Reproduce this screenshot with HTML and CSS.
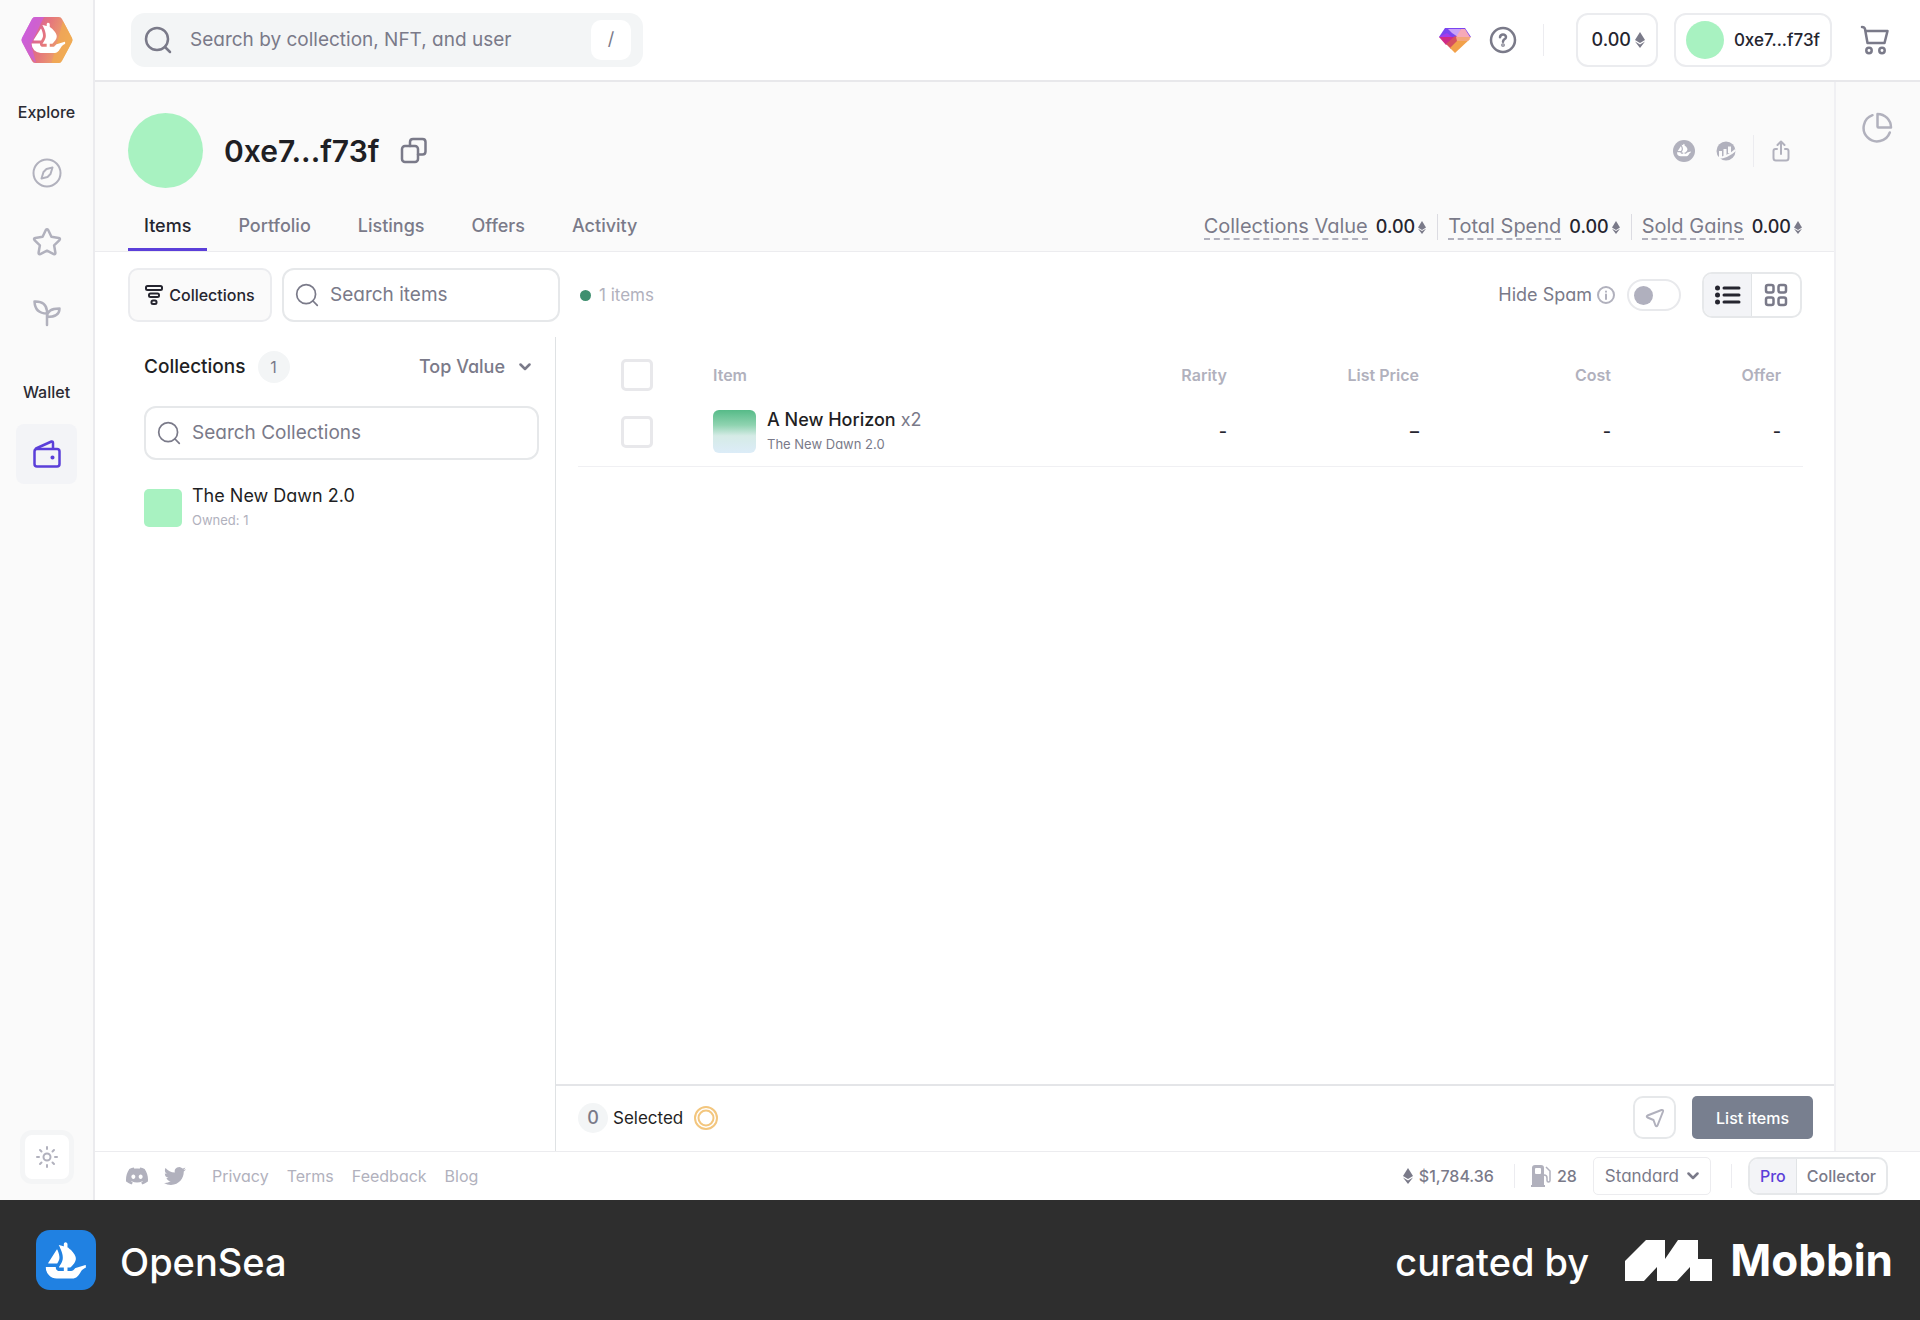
FILE: index.html
```html
<!DOCTYPE html>
<html lang="en">
<head>
	<meta charset="UTF-8">
	<meta name="viewport" content="width=device-width, initial-scale=1.0">
	<title>0xe7...f73f | OpenSea</title>
	<link rel="stylesheet" href="styles.css">
</head>
<body>

	<!-- shared icons -->
	<svg class="sprite" aria-hidden="true">
		<symbol id="i-search" viewBox="0 0 28 28"><circle cx="13" cy="13" r="11"/><path d="M21 21l5 5"/></symbol>
		<symbol id="i-eth" viewBox="0 0 10 16"><path d="M5 0l5 8-5 3-5-3z"/><path d="M0 9.500l5 3 5-3L5 16z"/></symbol>
		<symbol id="i-chevron" viewBox="0 0 12 8"><path d="M1.500 1.500L6 6l4.500-4.500"/></symbol>
		<symbol id="i-boat" viewBox="4 4 17 15"><path d="M5.920 12.403l.051-.081 3.123-4.884a.107.107 0 0 1 .187.014c.52 1.169.972 2.623.76 3.528-.088.372-.335.876-.614 1.342a2.405 2.405 0 0 1-.117.199.106.106 0 0 1-.09.045H6.013a.106.106 0 0 1-.091-.163z"/><path d="M19.834 14.083a.109.109 0 0 1-.065.101c-.243.103-1.070.485-1.414.962-.878 1.222-1.548 2.970-3.048 2.970H9.053a4.019 4.019 0 0 1-4.013-4.028v-.072c0-.058.048-.106.108-.106h3.485c.07 0 .12.063.115.132-.026.226.017.459.125.67.206.42.636.682 1.099.682h1.726v-1.347H9.990a.11.11 0 0 1-.089-.173l.063-.09c.16-.231.391-.586.621-.992.156-.274.308-.566.43-.86.024-.052.043-.107.065-.16.033-.094.067-.182.091-.269a4.570 4.570 0 0 0 .065-.223c.057-.25.081-.514.081-.787 0-.108-.004-.221-.014-.327-.005-.117-.02-.235-.034-.352a3.415 3.415 0 0 0-.048-.312 6.494 6.494 0 0 0-.098-.468l-.014-.06c-.03-.108-.056-.21-.09-.317a11.824 11.824 0 0 0-.328-.972 5.212 5.212 0 0 0-.142-.355c-.072-.178-.146-.339-.213-.49a3.564 3.564 0 0 1-.094-.197 4.658 4.658 0 0 0-.103-.213c-.024-.053-.053-.104-.072-.152l-.211-.388c-.029-.053.019-.118.077-.101l1.320.357h.01l.173.05.192.054.07.019v-.783c0-.379.302-.686.679-.686a.66.66 0 0 1 .477.202.69.69 0 0 1 .2.484V6.650l.141.039c.01.005.022.01.031.017.034.024.084.062.147.11.05.038.103.086.165.137a10.351 10.351 0 0 1 .574.504c.214.199.454.432.684.691.065.074.127.146.192.226.062.079.132.156.19.232.079.104.16.212.235.324.033.053.074.108.105.161.096.142.178.288.257.435.034.067.067.141.096.213.089.197.159.396.202.598a.65.65 0 0 1 .029.132v.01c.014.057.019.12.024.184a2.057 2.057 0 0 1-.106.874c-.031.084-.06.17-.098.254-.075.17-.161.343-.264.502-.034.06-.075.122-.113.182-.043.063-.089.123-.127.18a3.890 3.890 0 0 1-.173.221c-.053.072-.106.144-.166.209-.081.098-.16.19-.245.278-.048.058-.1.118-.156.17-.052.06-.108.113-.156.161-.084.084-.15.147-.208.202l-.137.122a.102.102 0 0 1-.072.03h-1.051v1.346h1.322c.295 0 .576-.104.804-.298.077-.067.415-.36.816-.802a.094.094 0 0 1 .05-.03l3.650-1.057a.108.108 0 0 1 .138.103z"/></symbol>
	</svg>

	<div class="app">
		<!-- left sidebar -->
		<nav class="sidebar">
			<a href="#" class="logo" aria-label="OpenSea">
				<svg width="52" height="46" viewBox="0 0 52 46">
					<defs>
						<linearGradient id="hex" x1="0" y1="0" x2="1" y2="0.300">
							<stop offset="0" stop-color="#cd5bea"/>
							<stop offset="0.300" stop-color="#d9639c"/>
							<stop offset="0.550" stop-color="#e5777c"/>
							<stop offset="1" stop-color="#efb062"/>
						</linearGradient>
						<clipPath id="hexclip"><path d="M14 0h24q2 0 3 2l10 19q1 2 0 4L41 44q-1 2-3 2H14q-2 0-3-2L1 25q-1-2 0-4L11 2q1-2 3-2z"/></clipPath>
					</defs>
					<g clip-path="url(#hexclip)">
						<path fill="url(#hex)" d="M0 0h52v46H0z"/>
						<path fill="#c95fe6" d="M10 0h13L10 27l5 19L0 30V10z" opacity=".7"/>
						<path fill="#f0aa50" d="M42 4l12 18-16 26h-8z" opacity=".75"/>
					</g>
					<use href="#i-boat" x="8" y="4" width="39" height="34" fill="#fff"/>
				</svg>
			</a>
			<span class="nav-title">Explore</span>
			<a href="#" class="nav-item" aria-label="Discover">
				<svg class="line" width="30" height="30" viewBox="0 0 30 30"><circle cx="15" cy="15" r="13.500"/><path d="M20.500 9.500l-2 6.500-3 3-6 1.500 2-6.500 3-3z"/></svg>
			</a>
			<a href="#" class="nav-item" aria-label="Watchlist">
				<svg class="line thick" width="30" height="30" viewBox="0 0 30 30"><path d="M13.700 2.300Q15 .4 16.300 2.300l3.100 6.500 7.300 1.100q2 .5.800 2.200l-5.400 5.200 1.300 7.400q.2 2-1.700 1.400L15 22.700l-6.700 3.400q-1.900.6-1.700-1.400l1.300-7.400-5.400-5.200q-1.200-1.700.8-2.200l7.300-1.100z"/></svg>
			</a>
			<a href="#" class="nav-item" aria-label="Drops">
				<svg class="line thick" width="30" height="30" viewBox="0 0 30 30"><path d="M15 27V15.500M15 15.500Q3 15.500 2.500 3.500 14 3 15 13v2.500M15 19q0-8.500 12.500-8.500Q27.500 19 15 19z"/></svg>
			</a>
			<span class="nav-title wallet">Wallet</span>
			<a href="#" class="nav-item active" aria-label="Wallet">
				<svg class="line thick" width="30" height="30" viewBox="0 0 30 30"><rect x="2.500" y="10" width="25" height="17.500" rx="2.500"/><path d="M4 9.500l15.500-7q1.500-.5 1.500 1.500v5.500"/><circle cx="20.500" cy="18.500" r=".8" fill="currentColor"/></svg>
			</a>
			<button class="theme" aria-label="Theme">
				<svg class="line" width="24" height="24" viewBox="0 0 24 24"><circle cx="12" cy="12" r="3.500"/><path d="M12 2v2M12 20v2M2 12h2M20 12h2M5 5l1.500 1.500M17.500 17.500L19 19M5 19l1.500-1.500M17.500 6.500L19 5"/></svg>
			</button>
		</nav>

		<div class="page">
			<!-- top bar -->
			<header class="topbar">
				<label class="global-search">
					<svg class="line thick" width="28" height="28"><use href="#i-search"/></svg>
					<input type="text" placeholder="Search by collection, NFT, and user" aria-label="Search">
					<kbd>/</kbd>
				</label>
				<div class="topbar-right">
					<a href="#" class="gem" aria-label="Rewards">
						<svg width="32" height="25" viewBox="0 0 32 25">
							<path fill="#7a45f0" d="M6 0h20l6 9H0z"/>
							<path fill="#c9a2f7" d="M9 1h13l-3 8-6-4z"/>
							<path fill="#f6a9b8" d="M22 1h4l5 8H17z"/>
							<path fill="#a43bea" d="M0 9l8-4 5 4-4 4z"/>
							<path fill="#cf2a86" d="M0 9h17l-10 8z"/>
							<path fill="#d5505f" d="M7 16l9-8 7 3-11 10z"/>
							<path fill="#f2a14a" d="M11 20l9-9h11L16 25z"/>
							<path fill="#f3a67c" d="M17 9h15l-3 4H18z"/>
						</svg>
					</a>
					<a href="#" class="help" aria-label="Help">
						<svg class="line thick" width="28" height="28" viewBox="0 0 28 28"><circle cx="14" cy="14" r="12"/><path d="M11 11.200q.4-2.700 3-2.700t3 2.500q0 1.600-1.700 2.300Q14 14 14 15.700"/><circle cx="14" cy="19" r=".6"/></svg>
					</a>
					<span class="divider"></span>
					<button class="pill">0.00<svg class="eth" width="10" height="16"><use href="#i-eth"/></svg></button>
					<button class="pill account"><span class="avatar"></span>0xe7...f73f</button>
					<a href="#" class="cart" aria-label="Cart">
						<svg class="line thick" width="30" height="30" viewBox="0 0 30 30"><path d="M2 2q2.500 0 3 2l2.500 14h17l3-12H6"/><circle cx="9" cy="25.500" r="2.700"/><circle cx="22" cy="25.500" r="2.700"/></svg>
					</a>
				</div>
			</header>

			<div class="middle">
				<main class="content">
					<section class="profile">
						<div class="profile-head">
							<span class="avatar big"></span>
							<h1>0xe7...f73f</h1>
							<button class="copy" aria-label="Copy address">
								<svg class="line thick" width="28" height="28" viewBox="0 0 28 28"><rect x="2" y="9" width="16" height="16" rx="3"/><path d="M10 9V5q0-3 3-3h9.500q3 0 3 3v9.500q0 3-3 3H18"/></svg>
							</button>
							<div class="profile-links">
								<a href="#" aria-label="OpenSea"><svg width="22" height="22" viewBox="0 0 22 22"><circle cx="11" cy="11" r="11" fill="#b1b1bd"/><use href="#i-boat" x="3" y="3" width="16" height="14" fill="#fff"/></svg></a>
								<a href="#" aria-label="Etherscan"><svg width="20" height="20" viewBox="0 0 20 20"><circle cx="10" cy="10" r="9.500" fill="#b1b1bd"/><path fill="#fafafa" d="M3 10h3v7H3zM7.500 8h3v7h-3zM12 5.500h3V12h-3z"/><path d="M2 17Q12 16 19.500 9" fill="none" stroke="#fafafa" stroke-width="2"/></svg></a>
								<span class="divider"></span>
								<button aria-label="Share"><svg class="line" width="20" height="22" viewBox="0 0 20 22"><path d="M6 9H4.500Q2.500 9 2.500 11v7q0 2.500 2.500 2.500h10q2.500 0 2.500-2.500v-7q0-2-2-2H14M10 14V2M6.500 5L10 1.500 13.500 5"/></svg></button>
							</div>
						</div>
						<div class="profile-nav">
							<nav class="tabs">
								<a href="#" class="active">Items</a>
								<a href="#">Portfolio</a>
								<a href="#">Listings</a>
								<a href="#">Offers</a>
								<a href="#">Activity</a>
							</nav>
							<div class="stats">
								<span class="stat"><span class="label">Collections Value</span><b>0.00</b><svg class="eth" width="8" height="13"><use href="#i-eth"/></svg></span>
								<span class="stat"><span class="label">Total Spend</span><b>0.00</b><svg class="eth" width="8" height="13"><use href="#i-eth"/></svg></span>
								<span class="stat"><span class="label">Sold Gains</span><b>0.00</b><svg class="eth" width="8" height="13"><use href="#i-eth"/></svg></span>
							</div>
						</div>
					</section>

					<!-- filters -->
					<div class="toolbar">
						<button class="filter">
							<svg class="line" width="18" height="20" viewBox="0 0 18 20"><rect x="1" y="1" width="16" height="4" rx="1.500"/><rect x="4" y="8.500" width="10" height="3.500" rx="1.500"/><rect x="6.500" y="15.500" width="5" height="3.500" rx="1.500"/></svg>
							Collections
						</button>
						<label class="field items-search">
							<svg class="line" width="24" height="24"><use href="#i-search"/></svg>
							<input type="text" placeholder="Search items" aria-label="Search items">
						</label>
						<span class="count"><i></i>1 items</span>
						<div class="view">
							<label for="spam">Hide Spam</label>
							<svg class="line info" width="18" height="18" viewBox="0 0 18 18"><circle cx="9" cy="9" r="8"/><path d="M9 8.500V13M9 5.500v.3"/></svg>
							<input type="checkbox" id="spam" class="switch">
							<div class="segment">
								<button class="on" aria-label="List">
									<svg width="26" height="20" viewBox="0 0 26 20"><path d="M9 3h15M9 10h15M9 17h15" stroke="#25252f" stroke-width="3" stroke-linecap="round"/><circle cx="2.500" cy="3" r="2.500"/><circle cx="2.500" cy="10" r="2.500"/><circle cx="2.500" cy="17" r="2.500"/></svg>
								</button>
								<button aria-label="Grid">
									<svg class="line thick" width="24" height="24" viewBox="0 0 24 24"><rect x="2" y="2" width="7.500" height="7.500" rx="2"/><rect x="14.500" y="2" width="7.500" height="7.500" rx="2"/><rect x="2" y="14.500" width="7.500" height="7.500" rx="2"/><rect x="14.500" y="14.500" width="7.500" height="7.500" rx="2"/></svg>
								</button>
							</div>
						</div>
					</div>

					<div class="columns">
						<aside class="collections">
							<div class="collections-head">
								<h2>Collections</h2>
								<span class="badge">1</span>
								<button class="sort">Top Value <svg class="line thick" width="12" height="8"><use href="#i-chevron"/></svg></button>
							</div>
							<label class="field">
								<svg class="line" width="24" height="24"><use href="#i-search"/></svg>
								<input type="text" placeholder="Search Collections" aria-label="Search Collections">
							</label>
							<a href="#" class="collection">
								<span class="thumb"></span>
								<span class="names">
									<span class="name">The New Dawn 2.0</span>
									<small>Owned: 1</small>
								</span>
							</a>
						</aside>

						<section class="items">
							<div class="table-wrap">
								<table>
									<thead>
										<tr>
											<th class="check"><input type="checkbox" aria-label="Select all"></th>
											<th class="item">Item</th>
											<th>Rarity</th>
											<th>List Price</th>
											<th>Cost</th>
											<th class="offer">Offer</th>
										</tr>
									</thead>
									<tbody>
										<tr>
											<td class="check"><input type="checkbox" aria-label="Select A New Horizon"></td>
											<td class="item">
												<div class="nft">
													<span class="art"></span>
													<span class="names">
														<span class="name"><b>A New Horizon</b> x2</span>
														<small>The New Dawn 2.0</small>
													</span>
												</div>
											</td>
											<td>-</td>
											<td>–</td>
											<td>-</td>
											<td class="offer">-</td>
										</tr>
									</tbody>
								</table>
							</div>
							<div class="actions">
								<span class="selected">0</span>
								<span>Selected</span>
								<svg class="coin" width="24" height="24" viewBox="0 0 24 24"><circle cx="12" cy="12" r="11"/><circle cx="12" cy="12" r="7.500"/></svg>
								<button class="send" aria-label="Transfer">
									<svg class="line" width="20" height="20" viewBox="0 0 20 20"><path d="M2.500 7.500L16.500 2q2-.5 1.500 1.500l-5.500 14q-1 1.500-2 0L8.500 12 2.500 9.500q-1.500-1 0-2z"/></svg>
								</button>
								<button class="list-items">List items</button>
							</div>
						</section>
					</div>
				</main>

				<aside class="rail">
					<button aria-label="Analytics">
						<svg class="line thick" width="32" height="32" viewBox="0 0 32 32"><path d="M11.500 3.200A13.500 13.500 0 1 0 28.800 20.500"/><path d="M16.500 2v12.500q0 1 1 1H30A13.500 13.500 0 0 0 16.500 2z"/></svg>
					</button>
				</aside>
			</div>

			<!-- status bar -->
			<footer class="footer">
				<a href="#" aria-label="Discord"><svg width="22" height="22" viewBox="0 0 24 24"><path d="M20.317 4.370a19.791 19.791 0 00-4.885-1.515.074.074 0 00-.079.037c-.211.375-.445.865-.608 1.250-1.845-.276-3.680-.276-5.487 0-.164-.393-.406-.874-.618-1.250a.077.077 0 00-.079-.037 19.736 19.736 0 00-4.885 1.515.07.07 0 00-.032.028C.533 9.046-.319 13.580.099 18.058a.082.082 0 00.031.056c2.053 1.508 4.041 2.423 5.993 3.029a.078.078 0 00.084-.028c.462-.630.873-1.295 1.226-1.994a.076.076 0 00-.042-.106c-.653-.248-1.274-.550-1.872-.892a.077.077 0 01-.008-.128c.126-.094.252-.192.372-.291a.074.074 0 01.078-.011c3.928 1.793 8.180 1.793 12.061 0a.074.074 0 01.079.01c.12.099.246.198.373.292a.077.077 0 01-.007.128 12.299 12.299 0 01-1.873.891.077.077 0 00-.041.107c.36.698.772 1.363 1.225 1.993a.076.076 0 00.084.029c1.961-.607 3.950-1.522 6.002-3.029a.077.077 0 00.031-.055c.5-5.177-.838-9.674-3.549-13.660a.061.061 0 00-.031-.029zM8.020 15.331c-1.183 0-2.157-1.086-2.157-2.419 0-1.333.956-2.419 2.157-2.419 1.211 0 2.176 1.095 2.157 2.419 0 1.333-.956 2.419-2.157 2.419zm7.975 0c-1.183 0-2.157-1.086-2.157-2.419 0-1.333.955-2.419 2.157-2.419 1.211 0 2.176 1.095 2.157 2.419 0 1.333-.946 2.419-2.157 2.419z"/></svg></a>
				<a href="#" aria-label="Twitter"><svg width="22" height="22" viewBox="0 0 24 24"><path d="M23.953 4.570a10 10 0 01-2.825.775 4.958 4.958 0 002.163-2.723c-.951.555-2.005.959-3.127 1.184a4.920 4.920 0 00-8.384 4.482C7.690 8.095 4.067 6.130 1.640 3.162a4.822 4.822 0 00-.666 2.475c0 1.710.87 3.213 2.188 4.096a4.904 4.904 0 01-2.228-.616v.06a4.923 4.923 0 003.946 4.827 4.996 4.996 0 01-2.212.085 4.936 4.936 0 004.604 3.417 9.867 9.867 0 01-6.102 2.105c-.39 0-.779-.023-1.170-.067a13.995 13.995 0 007.557 2.209c9.053 0 13.998-7.496 13.998-13.985 0-.21 0-.42-.015-.63A9.935 9.935 0 0024 4.590z"/></svg></a>
				<nav class="links">
					<a href="#">Privacy</a>
					<a href="#">Terms</a>
					<a href="#">Feedback</a>
					<a href="#">Blog</a>
				</nav>
				<div class="status">
					<span class="price"><svg class="eth" width="10" height="16"><use href="#i-eth"/></svg>$1,784.36</span>
					<span class="divider"></span>
					<span class="gas">
						<svg width="20" height="22" viewBox="0 0 20 22"><path fill-rule="evenodd" d="M1 3q0-3 3-3h6q3 0 3 3v17h1v2H0v-2h1zm3 1v4q0 1 1 1h4q1 0 1-1V4q0-1-1-1H5Q4 3 4 4z"/><path d="M13 10q3 0 3 3v2.500q0 1.500 1.500 1.500T19 15.500V6l-4-4" fill="none" stroke="currentColor" stroke-width="1.500"/></svg>
						28
					</span>
					<button class="speed">Standard <svg class="line thick" width="12" height="8"><use href="#i-chevron"/></svg></button>
					<span class="divider"></span>
					<div class="segment mode">
						<button class="on">Pro</button>
						<button>Collector</button>
					</div>
				</div>
			</footer>
		</div>
	</div>

	<!-- banner -->
	<div class="banner">
		<span class="app-icon"><svg width="46" height="41"><use href="#i-boat"/></svg></span>
		<span class="app-name">OpenSea</span>
		<span class="curated">curated by</span>
		<svg class="mobbin" width="88" height="42" viewBox="0 0 88 42"><path d="M0 42V22L21 1h19v19L53 1h20v19h14v22H65V28L52 42H32V28L19 42z"/></svg>
		<span class="mobbin-name">Mobbin</span>
	</div>

</body>
</html>
```
FILE: styles.css
```css
* {box-sizing: border-box; }
body {margin: 0; min-height: 100vh; display: flex; flex-direction: column; font-family: Inter, "Open Sans", sans-serif; font-feature-settings: "cv11"; font-size: 18px; line-height: 24px; color: #7a7a89; background: #fff; }
a {color: inherit; text-decoration: none; }
button, input {font: inherit; font-feature-settings: inherit; color: inherit; }
button {padding: 0; border: 0; background: none; cursor: pointer; }
svg {display: block; flex: none; fill: currentColor; }
.sprite {position: absolute; width: 0; height: 0; }
.line {fill: none; stroke: currentColor; stroke-width: 2; stroke-linecap: round; stroke-linejoin: round; }
.line.thick {stroke-width: 2.5; }
input::placeholder {color: #7a7a89; opacity: 1; }
.divider {width: 1px; height: 32px; background: #ececf0; }
.eth {color: #7a7a89; }

.app {flex: 1; display: flex; }

/* sidebar */
.sidebar {width: 95px; flex: none; display: flex; flex-direction: column; align-items: center; padding: 17px 0 16px; background: #fafafa; border-right: 2px solid #ebebee; color: #b1b1bd; }
.nav-title {margin: 37px 0 19px; font-size: 16px; font-weight: 500; color: #2b2b33; font-feature-settings: normal; }
.nav-title.wallet {margin: 27px 0 20px; }
.nav-item {width: 61px; height: 60px; margin-bottom: 10px; display: flex; align-items: center; justify-content: center; border-radius: 8px; }
.nav-item.active {background: #f3f4f7; color: #5b3fd9; }
.theme {width: 54px; height: 54px; margin-top: auto; display: flex; align-items: center; justify-content: center; background: #fff; border: 5px solid #f4f5f6; border-radius: 12px; }

/* top bar */
.page {flex: 1; min-width: 0; display: flex; flex-direction: column; }
.topbar {height: 82px; display: flex; align-items: center; justify-content: space-between; padding: 0 30px 0 36px; border-bottom: 2px solid #e8e8eb; }
.global-search {width: 512px; height: 54px; display: flex; align-items: center; padding: 0 12px 0 13px; background: #f3f5f6; border-radius: 14px; }
.global-search input {flex: 1; min-width: 0; padding: 0 18px; border: 0; outline: 0; background: none; font-size: 19px; }
.global-search kbd {width: 40px; height: 40px; line-height: 38px; text-align: center; font-family: inherit; background: #fff; border-radius: 10px; }
.topbar-right {display: flex; align-items: center; }
.help {margin: 0 26px 0 18px; }
.pill {height: 54px; margin-left: 16px; padding: 0 11px 0 14px; display: flex; align-items: center; gap: 4px; border: 2px solid #ebecef; border-radius: 12px; font-size: 18px; font-weight: 500; color: #25252f; white-space: nowrap; }
.divider + .pill {margin-left: 32px; }
.pill.account {padding: 0 10px; gap: 10px; font-size: 17px; }
.avatar {width: 38px; height: 38px; border-radius: 50%; background: #a8f2c1; }
.avatar.big {width: 75px; height: 75px; }
.cart {margin-left: 28px; }

/* content and right rail */
.middle {flex: 1; display: flex; }
.content {flex: 1; min-width: 0; display: flex; flex-direction: column; }
.rail {width: 86px; flex: none; padding: 30px 0 0 25px; background: #fafafa; border-left: 2px solid #f0f0f3; color: #b1b1bd; }

/* profile */
.profile {padding: 31px 32px 0 33px; background: #fafafa; border-bottom: 1px solid #ececef; }
.profile-head {display: flex; align-items: center; }
.profile h1 {margin: 0 21px; font-size: 30px; line-height: 40px; font-weight: 600; color: #1f1f24; }
.profile-links {margin-left: auto; padding-right: 11px; display: flex; align-items: center; gap: 21px; color: #b1b1bd; }
.profile-links .divider {margin: 0 -4px; }
.profile-nav {display: flex; justify-content: space-between; align-items: center; margin-top: 12px; }
.tabs {display: flex; gap: 15px; }
.tabs a {height: 51px; padding: 14px 16px 0; font-weight: 500; border-bottom: 3px solid transparent; }
.tabs a.active {color: #25252f; border-color: #5b3fd9; }
.stats {display: flex; padding-top: 3px; }
.stat {display: flex; align-items: center; gap: 3px; padding-left: 10px; }
.stat + .stat {margin-left: 11px; border-left: 1px solid #dcdce2; }
.stat .label {margin-right: 5px; font-size: 20px; border-bottom: 2px dashed #b1b1bd; }
.stat b {font-weight: 500; color: #25252f; }

/* toolbar */
.toolbar {display: flex; align-items: center; padding: 16px 32px 15px 33px; }
.filter {height: 54px; width: 144px; display: flex; align-items: center; justify-content: center; gap: 6px; background: #fafafa; border: 2px solid #ebecef; border-radius: 10px; font-size: 16px; font-weight: 500; color: #25252f; }
.field {height: 54px; display: flex; align-items: center; gap: 11px; padding: 0 11px; border: 2px solid #e6e8ea; border-radius: 12px; }
.field input {flex: 1; width: 100%; min-width: 0; padding: 0; border: 0; outline: 0; background: none; font-size: 19px; }
.items-search {width: 278px; margin: 0 20px 0 10px; }
.count {display: flex; align-items: center; gap: 8px; font-size: 17px; color: #b1b1bd; }
.count i {width: 11px; height: 11px; border-radius: 50%; background: #3f8f6f; }
.view {margin-left: auto; display: flex; align-items: center; }
.info {margin: 0 12px 0 5px; color: #b1b1bd; }
.switch {appearance: none; width: 54px; height: 32px; margin: 0 21px 0 0; padding: 5px; border: 2px solid #e8e9ec; border-radius: 16px; }
.switch::before {content: ""; display: block; width: 19px; height: 19px; border-radius: 50%; background: #b0b0be; }
.switch:checked::before {margin-left: auto; background: #5b3fd9; }
.segment {display: flex; border: 2px solid #e6e8ea; border-radius: 10px; overflow: hidden; }
.segment button {height: 42px; width: 48px; display: flex; align-items: center; justify-content: center; }
.segment .on {background: #f3f4f7; border-right: 1px solid #e1e4e6; color: #25252f; }

/* collections */
.columns {flex: 1; display: flex; }
.collections {width: 461px; flex: none; padding: 12px 16px 0 49px; border-right: 1px solid #dfe2e4; }
.collections-head {height: 36px; display: flex; align-items: center; margin-bottom: 21px; }
.collections h2 {margin: 0; font-size: 19px; font-weight: 500; color: #1f1f24; }
.badge, .selected {width: 32px; height: 32px; line-height: 32px; border-radius: 50%; text-align: center; background: #f3f5f6; }
.badge {margin-left: 12px; font-size: 16px; }
.sort {margin-left: auto; padding-right: 8px; display: flex; align-items: center; gap: 14px; font-weight: 500; }
.collection {display: flex; align-items: center; gap: 10px; margin-top: 24px; }
.thumb {width: 38px; height: 38px; border-radius: 5px; background: #a8f2c1; }
.names {display: flex; flex-direction: column; }
.names small {font-size: 13px; line-height: 24px; }
.collection .name {color: #1f1f24; }
.collection small {color: #b1b1bd; }

/* table */
.items {flex: 1; min-width: 0; display: flex; flex-direction: column; }
.table-wrap {flex: 1; padding: 8px 31px 0 22px; }
table {width: 100%; table-layout: fixed; border-collapse: collapse; }
th, td {padding: 0; text-align: right; }
th {height: 60px; font-size: 16px; font-weight: 600; color: #b1b1bd; font-feature-settings: normal; }
td {height: 61px; padding-bottom: 7px; color: #25252f; font-weight: 500; border-bottom: 1px solid #f0f0f3; }
th:nth-child(n+3), td:nth-child(n+3) {width: 192px; }
th.check, td.check {width: 135px; text-align: left; padding-left: 43px; }
th.item, td.item {text-align: left; }
th.offer, td.offer {padding-right: 22px; }
table input {appearance: none; display: block; width: 32px; height: 32px; margin: 0; border: 3px solid #e8e8eb; border-radius: 5px; }
table input:checked {background: #5b3fd9; }
.nft {display: flex; align-items: center; gap: 11px; color: #7a7a89; font-weight: 400; }
.nft b {font-weight: 500; color: #1f1f24; }
.art {width: 43px; height: 43px; border-radius: 6px; background: linear-gradient(#56bb88, #8fd3b0 35%, #d5ebe6 60%, #dcecf8); }

/* selection bar */
.actions {height: 67px; display: flex; align-items: center; gap: 5px; padding: 0 21px 2px 22px; border-top: 2px solid #e4e5e8; font-size: 17px; color: #1f1f24; }
.selected {width: 30px; height: 30px; line-height: 30px; font-size: 18px; font-weight: 500; color: #7a7a89; }
.coin {margin-left: 6px; fill: none; stroke: #f3c67e; stroke-width: 2; }
.send {width: 43px; height: 43px; margin: 0 11px 0 auto; display: flex; align-items: center; justify-content: center; border: 2px solid #e6e8ea; border-radius: 10px; color: #b1b1bd; }
.list-items {height: 43px; padding: 0 24px; font-size: 16px; font-weight: 500; color: #fff; background: #787f8f; border-radius: 5px; }

/* status bar */
.footer {height: 49px; display: flex; align-items: center; gap: 16px; padding: 0 32px 0 31px; border-top: 1px solid #ececef; color: #b1b1bd; font-size: 16px; }
.links {display: flex; gap: 18px; margin-left: 10px; }
.status {margin-left: auto; display: flex; align-items: center; color: #7a7a89; }
.status .divider {height: 24px; margin: 0 16px 0 20px; }
.price, .gas {display: flex; align-items: center; gap: 6px; font-weight: 500; }
.gas svg {color: #b1b1bd; }
.speed {height: 38px; margin-left: 16px; padding: 0 11px; display: flex; align-items: center; gap: 8px; font-size: 17px; border: 1px solid #ececef; border-radius: 5px; }
.mode button {height: 34px; width: auto; padding: 0 10px; font-weight: 500; }
.mode .on {color: #5b3fd9; }

/* banner */
.banner {height: 120px; display: flex; align-items: center; padding: 0 27px 0 36px; background: #2e2e2e; color: #fff; font-size: 38px; line-height: 48px; font-weight: 500; font-feature-settings: normal; }
.app-icon {width: 60px; height: 60px; margin-right: 24px; display: flex; align-items: center; justify-content: center; border-radius: 14px; background: #2081e2; }
.app-name, .curated {padding-top: 3px; }
.curated {margin-left: auto; }
.mobbin {margin: 0 17px 0 36px; }
.mobbin-name {font-size: 44px; font-weight: 700; }
```
